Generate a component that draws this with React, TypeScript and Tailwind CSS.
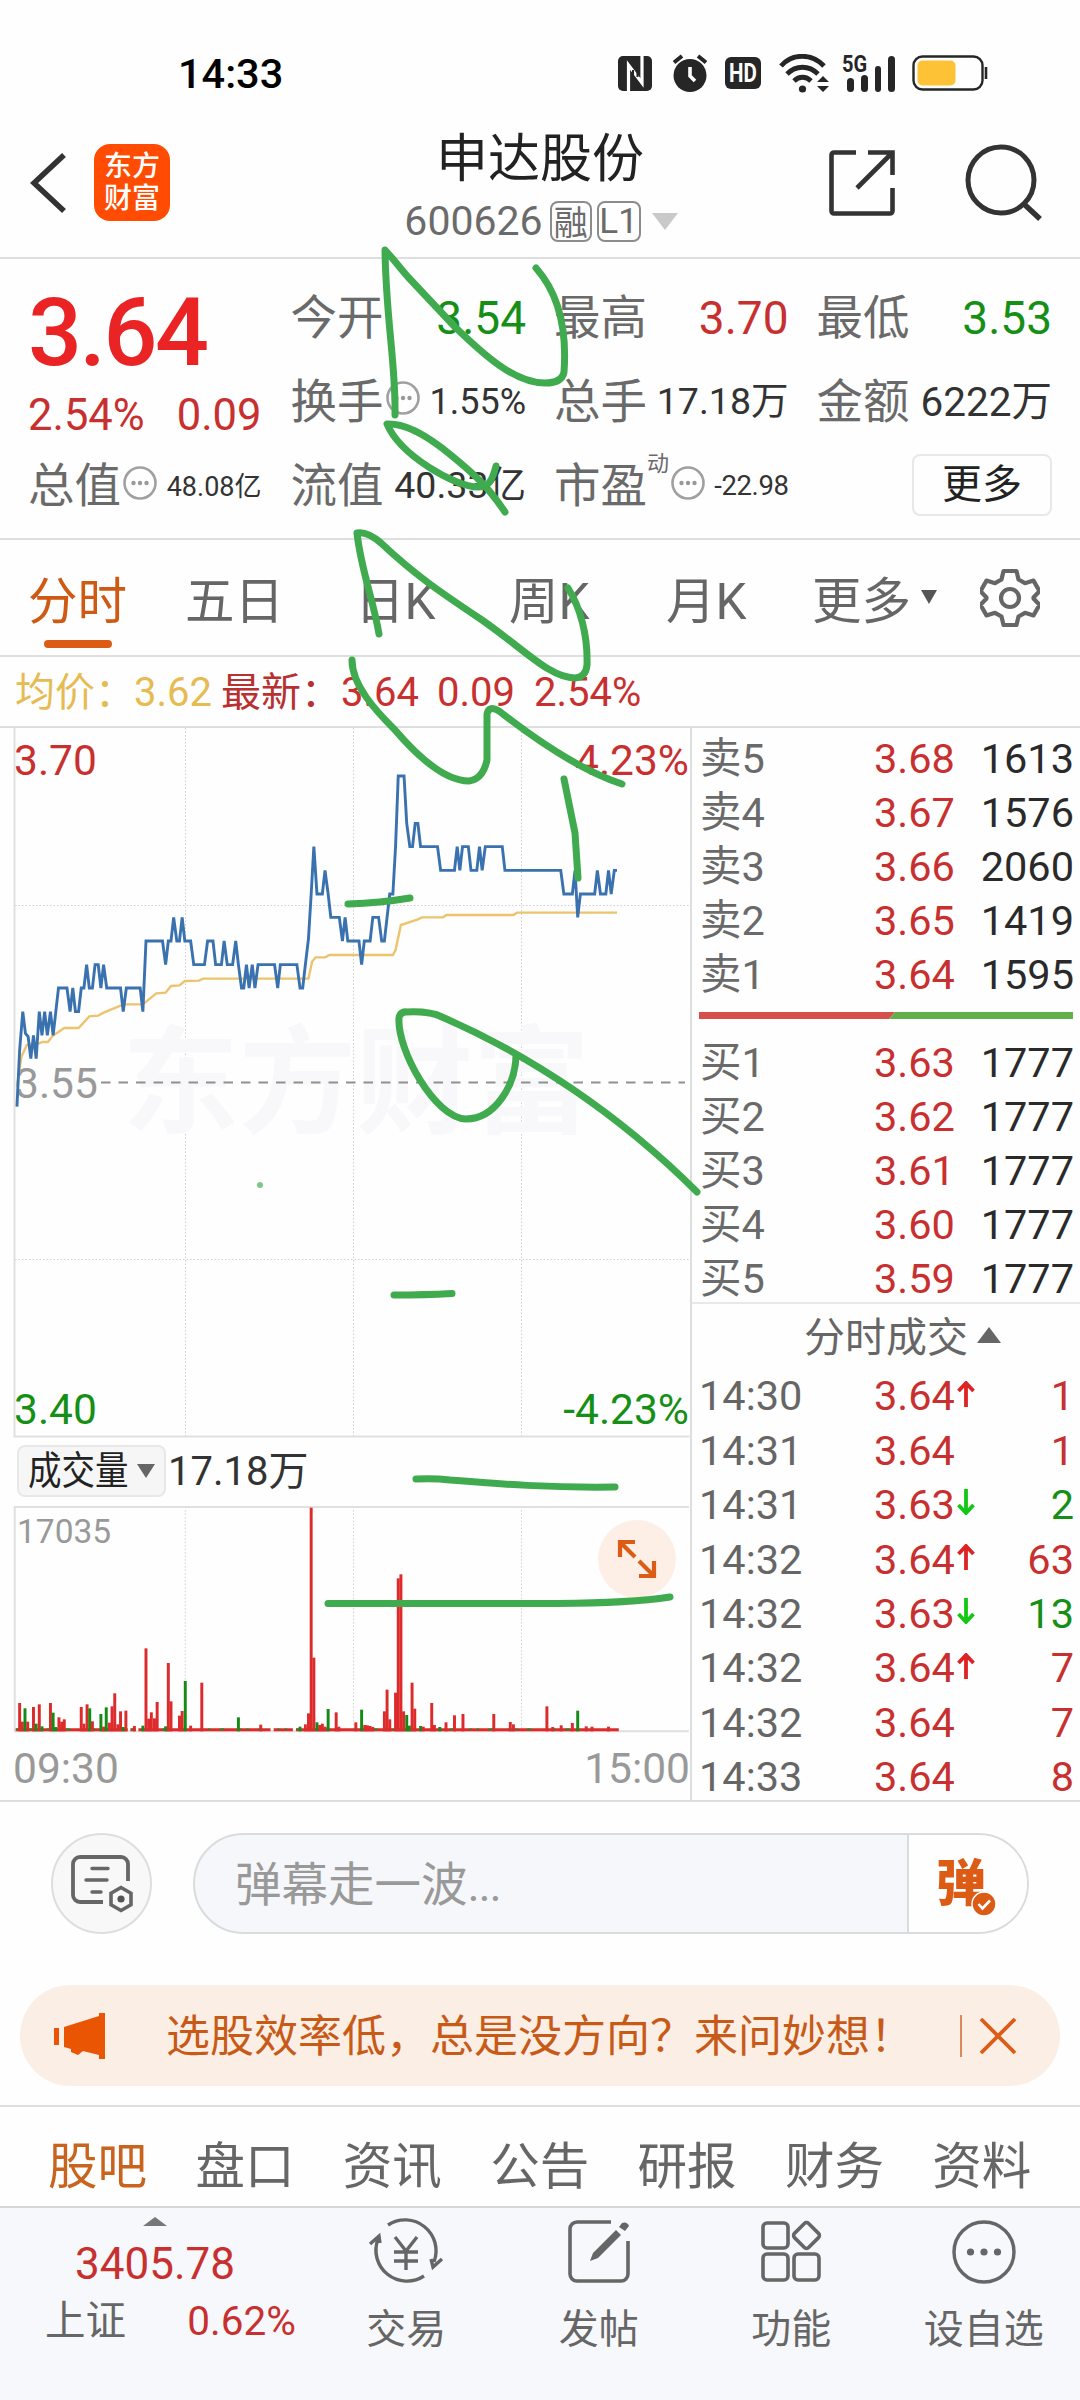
import React from "react";

const RED = "text-[#c83030]";
const GREEN = "text-[#168f16]";

type IconProps = { box: string; className: string; children: React.ReactNode };
const Icon = ({ box, className, children }: IconProps) => (
  <svg viewBox={box} className={"shrink-0 " + className} fill="none">
    {children}
  </svg>
);

/* ---------- status bar ---------- */
const StatusBar = () => (
  <div className="flex h-[120px] items-center pt-[26px] pl-[178px] pr-[92px] justify-between">
    <span className="text-[41.500px] leading-none font-medium text-black pt-[2px]">14:33</span>
    <div className="flex items-center text-[#262626]">
      <Icon box="0 0 35 35" className="w-[35px] h-[35px] mr-[19px]">
        <rect width="34" height="35" rx="5" fill="#262626" />
        <path d="M10.500 35V9L24 27V0" stroke="#fff" strokeWidth="3.200" />
        <path d="M15 14v8M19.500 13v8" stroke="#262626" strokeWidth="2" />
      </Icon>
      <Icon box="0 0 36 38" className="w-[36px] h-[38px] mr-[17px]">
        <circle cx="18" cy="21.500" r="16.500" fill="#262626" />
        <path d="M2 8.500 10 2M34 8.500 26 2" stroke="#262626" strokeWidth="4" />
        <path d="M18 13v9l5 5" stroke="#fff" strokeWidth="3.600" />
      </Icon>
      <span className="flex w-[36px] h-[32px] mr-[18px] items-center justify-center rounded-[6px] bg-[#262626] text-[25px] leading-none font-bold text-white">
        <span className="scale-x-[0.82]">HD</span>
      </span>
      <Icon box="0 0 50 39" className="w-[50px] h-[39px] mr-[14px]">
        <path d="M2 12C13-1 33-1 45 12M8 20c9-9 22-9 31 0M15 27c5-5 12-5 17 0" stroke="#262626" strokeWidth="4.800" />
        <circle cx="23.500" cy="35" r="3.600" fill="#262626" />
        <path d="m38 28 6-6 6 6zM38 32l6 6 6-6z" fill="#262626" />
      </Icon>
      <span className="relative flex w-[52px] h-[38px] mr-[17px] items-end gap-[7px] pl-[4px]">
        <span className="absolute -left-[1px] -top-[1px] text-[23px] leading-none font-bold">
          <span className="inline-block origin-left scale-x-[0.87]">5G</span>
        </span>
        <span className="w-[7px] h-[14px] rounded-sm bg-[#262626]" />
        <span className="w-[7px] h-[17px] rounded-sm bg-[#262626]" />
        <span className="w-[7px] h-[26px] rounded-sm bg-[#262626]" />
        <span className="w-[7px] h-[36px] rounded-sm bg-[#262626]" />
      </span>
      <Icon box="0 0 76 36" className="w-[76px] h-[36px]">
        <rect x="1.500" y="1.500" width="69" height="33" rx="9" stroke="#262626" strokeWidth="2.400" />
        <rect x="5.500" y="5.500" width="38" height="25" rx="5" fill="#fdc235" />
        <path d="M74 12v12" stroke="#262626" strokeWidth="2.600" />
      </Icon>
    </div>
  </div>
);

/* ---------- title bar ---------- */
const Header = () => (
  <div className="flex h-[139px] border-b-2 border-[#dedede]">
    <div className="flex w-[330px] items-center pb-[12px] pl-[30px]">
      <Icon box="0 0 38 62" className="w-[38px] h-[62px]">
        <path d="M34 3 4 31l30 28" stroke="#333" strokeWidth="5.600" />
      </Icon>
      <div className="ml-[26px] flex h-[77px] w-[76px] flex-col items-center justify-center rounded-[16px] bg-[#ff4c02] text-[28px] leading-[32px] font-medium text-white">
        <span>东方</span>
        <span>财富</span>
      </div>
    </div>
    <div className="flex w-[420px] flex-col items-center">
      <div className="mt-[14px] text-[52px] leading-[52px] text-[#222]">申达股份</div>
      <div className="mt-[15px] flex items-center pl-[2px] text-[41px] leading-none text-[#6b6b6b]">
        <span>600626</span>
        <span className="ml-[7px] flex h-[41px] w-[42px] items-center justify-center rounded-[8px] border-2 border-[#8c8c8c] pt-[2px] text-[34px] leading-none">融</span>
        <span className="ml-[5px] flex h-[41px] w-[44px] items-center justify-center rounded-[8px] border-2 border-[#8c8c8c] text-[35px] leading-none">L1</span>
        <Icon box="0 0 26 17" className="ml-[11px] w-[26px] h-[17px]">
          <path d="M0 0h26L13 17z" fill="#c9c9c9" />
        </Icon>
      </div>
    </div>
    <div className="flex flex-1 items-center justify-end pb-[12px] pr-[36px]">
      <Icon box="0 0 66 66" className="w-[66px] h-[66px] mr-[70px]">
        <path d="M27 2.500H5a2.500 2.500 0 0 0-2.500 2.500v56A2.500 2.500 0 0 0 5 63.500h56a2.500 2.500 0 0 0 2.500-2.500V38" stroke="#333" strokeWidth="4.600" />
        <path d="M39 2.500h24.500V25M63 3 28 38" stroke="#333" strokeWidth="4.600" />
      </Icon>
      <Icon box="0 0 79 78" className="w-[79px] h-[78px]">
        <circle cx="36" cy="36" r="33" stroke="#333" strokeWidth="5" />
        <path d="m59 60 16 15" stroke="#333" strokeWidth="5.500" />
      </Icon>
    </div>
  </div>
);

/* ---------- quote summary ---------- */
const Info = () => (
  <Icon box="0 0 34 34" className="w-[34px] h-[34px]">
    <circle cx="17" cy="17" r="15.500" stroke="#a0a0a0" strokeWidth="2.600" />
    <circle cx="10.500" cy="17" r="2.200" fill="#999" />
    <circle cx="17" cy="17" r="2.200" fill="#999" />
    <circle cx="23.500" cy="17" r="2.200" fill="#999" />
  </Icon>
);

const Label = ({ children }: { children: React.ReactNode }) => (
  <span className="pt-[3px] text-[46.500px] leading-none text-[#6a6a6a]">{children}</span>
);

const Row = ({ children }: { children: React.ReactNode }) => (
  <div className="flex h-[84px] items-center justify-between">{children}</div>
);

const Quote = () => (
  <div className="flex h-[281px] border-b-2 border-[#dedede] pt-[16px] pl-[28px] pr-[28px] whitespace-nowrap">
    <div className="flex w-[234px] flex-col">
      <div className="flex h-[114px] items-center text-[95px] leading-none font-medium tracking-[-2.5px] text-[#ea2424]">
        <span>3.64</span>
      </div>
      <div className={"flex h-[54px] items-center justify-between text-[43.500px] leading-none " + RED}>
        <span>2.54%</span>
        <span>0.09</span>
      </div>
      <div className="flex h-[84px] items-center">
        <Label>总值</Label>
        <span className="ml-[2px] -mt-[5px]"><Info /></span>
        <span className="ml-auto text-[27px] leading-none text-[#333] pt-[4px]">48.08亿</span>
      </div>
    </div>
    <div className="ml-[29px] flex w-[236px] flex-col">
      <Row>
        <Label>今开</Label>
        <span className={"pt-[2px] text-[46px] leading-none " + GREEN}>3.54</span>
      </Row>
      <Row>
        <span className="flex items-center">
          <Label>换手</Label>
          <span className="ml-[2px] -mt-[6px]"><Info /></span>
        </span>
        <span className="pt-[2px] text-[36px] leading-none text-[#333]">1.55%</span>
      </Row>
      <Row>
        <Label>流值</Label>
        <span className="pt-[2px] text-[37.500px] leading-none text-[#333]">40.33亿</span>
      </Row>
    </div>
    <div className="ml-[28px] flex w-[235px] flex-col">
      <Row>
        <Label>最高</Label>
        <span className={"pt-[2px] text-[46px] leading-none " + RED}>3.70</span>
      </Row>
      <Row>
        <Label>总手</Label>
        <span className="pt-[2px] text-[37.500px] leading-none text-[#333]">17.18万</span>
      </Row>
      <div className="flex h-[84px] items-center">
        <Label>市盈</Label>
        <span className="-mt-[42px] text-[22px] leading-none text-[#6a6a6a]">动</span>
        <span className="ml-[2px] -mt-[5px]"><Info /></span>
        <span className="ml-auto pt-[2px] text-[27.500px] leading-none text-[#333] tracking-[-0.4px]">-22.98</span>
      </div>
    </div>
    <div className="ml-[28px] flex w-[236px] flex-col">
      <Row>
        <Label>最低</Label>
        <span className={"pt-[2px] text-[46px] leading-none " + GREEN}>3.53</span>
      </Row>
      <Row>
        <Label>金额</Label>
        <span className="pt-[2px] text-[40.500px] leading-none text-[#333]">6222万</span>
      </Row>
      <div className="flex h-[84px] items-center justify-end">
        <span className="flex h-[62px] w-[140px] items-center justify-center rounded-[8px] border-2 border-[#e8e8e8] text-[40px] leading-none text-[#222]">更多</span>
      </div>
    </div>
  </div>
);

/* ---------- period tabs ---------- */
const TABS = [
  { t: "分时", w: "w-[157px]" },
  { t: "五日", w: "w-[170px]" },
  { t: "日K", w: "w-[154px]" },
  { t: "周K", w: "w-[157px]" },
  { t: "月K", w: "w-[146px]" },
];

const PeriodTabs = () => (
  <div className="flex h-[117px] border-b-2 border-[#dedede] pl-[28px] text-[49.500px] leading-none text-[#666] whitespace-nowrap">
    {TABS.map((tab, i) => (
      <div key={tab.t} className={tab.w + " flex flex-col"}>
        <span className={i === 0 ? "mt-[38px] text-[#cf5a14]" : "mt-[38px]"}>{tab.t}</span>
        {i === 0 && <span className="mt-[12px] ml-[16px] h-[8px] w-[68px] rounded-full bg-[#dc5c16]" />}
      </div>
    ))}
    <span className="mt-[38px]">更多</span>
    <Icon box="0 0 16 14" className="mt-[50px] ml-[10px] w-[16px] h-[14px]">
      <path d="M0 0h16L8 14z" fill="#555" />
    </Icon>
    <Icon box="-30 -30 60 60" className="mt-[28px] ml-[43px] w-[60px] h-[60px]">
      <path
        d="M-6.500-27h13l2 8.500 6.500 3.700 8.500-2.600 6 10.500-6 6.400v1l6 6.400-6 10.500-8.500-2.600-6.500 3.700-2 8.500h-13l-2-8.500-6.500-3.700-8.500 2.600-6-10.500 6-6.400v-1l-6-6.400 6-10.500 8.500 2.600 6.500-3.700z"
        stroke="#666"
        strokeWidth="4.200"
        strokeLinejoin="round"
      />
      <circle r="9" stroke="#666" strokeWidth="4.200" />
    </Icon>
  </div>
);

const PriceLine = () => (
  <div className="flex h-[71px] items-center border-b-2 border-[#dedede] pl-[15px] pt-[2px] text-[40px] leading-none whitespace-nowrap">
    <span className="w-[119px] text-[#e6bb52]">均价：</span>
    <span className="w-[87px] text-[#e6bb52]">3.62</span>
    <span className="w-[120px] text-[#b83030]">最新：</span>
    <span className="w-[96px] text-[#c83030]">3.64</span>
    <span className="w-[97px] text-[#c83030]">0.09</span>
    <span className="text-[#c83030]">2.54%</span>
  </div>
);

/* ---------- intraday chart ---------- */
const PRICE =
  "38,1160 44,990 51,875 57,940 63,950 69,1016 75,946 81,1016 88,875 94,946 100,875 106,946 113,875 119,946 131,804 150,804 157,875 163,804 169,875 176,875 182,804 188,804 194,734 200,804 207,804 213,734 220,734 226,804 232,734 239,804 270,804 276,875 283,804 314,804 320,875 327,663 364,663 371,734 377,663 383,663 389,592 396,663 402,663 408,592 414,663 427,663 434,734 458,734 465,663 477,663 483,734 496,734 502,663 509,734 521,734 528,663 534,734 541,804 546,804 552,734 558,804 565,734 571,804 578,734 615,734 622,804 628,734 665,734 672,804 678,804 684,734 691,655 697,522 703,380 710,522 722,522 728,451 735,522 741,592 760,592 767,663 773,592 779,663 804,663 810,734 816,663 829,663 835,592 848,592 855,663 861,663 867,592 873,522 880,522 886,380 892,168 905,168 911,310 918,380 924,380 930,310 936,310 942,380 980,380 987,451 1018,451 1024,380 1030,451 1036,380 1049,380 1055,451 1068,451 1074,380 1080,451 1087,380 1125,380 1131,451 1256,451 1263,522 1282,522 1288,451 1294,592 1300,522 1332,522 1338,451 1345,522 1357,522 1363,451 1369,522 1376,451 1382,451";
const AVERAGE =
  "38,1100 48,1010 60,975 88,970 95,966 107,966 119,946 131,936 144,924 176,924 200,889 220,887 232,878 270,857 283,853 320,853 350,820 371,818 383,798 402,796 414,783 446,782 455,776 691,776 699,725 707,712 728,712 738,705 880,705 886,690 898,615 936,598 945,592 992,592 1000,585 1150,585 1158,578 1382,578";

const PriceChart = () => (
  <div className="relative h-[710px]">
    <svg className="absolute inset-0 h-[710px] w-[692px]" viewBox="0 0 692 710" fill="none">
      <path d="M185.500 0V708M353.500 0V708M521.500 0V708M15 177.500H689M15 531.500H689" stroke="#cfcfcf" strokeDasharray="1.500 2" />
      <path d="M14.500 0V708.500H689.500" stroke="#e0e0e1" strokeWidth="2" />
      <text x="356" y="396" fontSize="117" fontWeight="bold" textAnchor="middle" fill="#f8f8fa" fontFamily="Noto Sans CJK SC">东方财富</text>
      <path d="M101 354.500H685" stroke="#909090" strokeWidth="2" strokeDasharray="9.500 8" />
    </svg>
    <span className="absolute left-[15px] top-[335px] text-[42.500px] leading-none text-[#999]">3.55</span>
    <svg className="absolute inset-0 h-[710px] w-[692px]" viewBox="0 24 1550 2130" preserveAspectRatio="none" fill="none">
      <polyline points={AVERAGE} stroke="#ecc46e" strokeWidth="2.400" vectorEffect="non-scaling-stroke" />
      <polyline points={PRICE} stroke="#3a72b0" strokeWidth="2.900" vectorEffect="non-scaling-stroke" />
    </svg>
    <span className={"absolute left-[14px] top-[12px] text-[42.500px] leading-none " + RED}>3.70</span>
    <span className={"absolute right-[1px] top-[12px] text-[42.500px] leading-none " + RED}>4.23%</span>
    <span className={"absolute left-[14px] top-[661px] text-[42.500px] leading-none " + GREEN}>3.40</span>
    <span className={"absolute right-[1px] top-[661px] text-[42.500px] leading-none " + GREEN}>-4.23%</span>
  </div>
);

/* x, top, colour (r or g) of the taller bars; the rest is a thin strip along the base line */
const BARS: [number, number, string][] = [
  [44, 818, "r"], [50, 874, "r"], [56, 834, "g"], [62, 874, "r"], [75, 830, "r"], [81, 880, "g"], [88, 822, "r"], [94, 888, "g"],
  [113, 818, "r"], [119, 847, "g"], [125, 890, "g"], [132, 861, "r"], [138, 874, "r"], [144, 867, "r"], [182, 830, "r"], [188, 880, "r"],
  [195, 822, "r"], [201, 834, "g"], [207, 873, "r"], [226, 851, "g"], [232, 889, "r"], [238, 831, "g"], [245, 877, "r"], [251, 828, "r"],
  [257, 789, "r"], [264, 882, "r"], [270, 843, "r"], [276, 890, "g"], [282, 841, "r"], [301, 887, "r"], [320, 886, "g"], [327, 654, "r"],
  [333, 865, "r"], [339, 846, "r"], [346, 864, "r"], [352, 815, "r"], [371, 888, "g"], [377, 698, "r"], [383, 813, "r"], [402, 856, "r"],
  [408, 842, "r"], [415, 752, "g"], [427, 886, "r"], [452, 757, "r"], [534, 861, "g"], [584, 883, "r"], [672, 889, "g"], [684, 882, "r"],
  [691, 849, "r"], [697, 232, "r"], [703, 682, "r"], [710, 876, "g"], [716, 884, "r"], [722, 880, "r"], [728, 889, "r"], [735, 836, "g"],
  [753, 846, "r"], [759, 889, "r"], [797, 876, "r"], [810, 838, "g"], [817, 884, "r"], [823, 885, "r"], [829, 887, "r"], [835, 890, "r"],
  [861, 843, "r"], [867, 778, "r"], [873, 867, "r"], [886, 787, "r"], [892, 444, "r"], [898, 432, "r"], [904, 843, "r"], [911, 854, "g"],
  [917, 886, "g"], [923, 757, "r"], [929, 835, "r"], [942, 887, "g"], [948, 889, "r"], [967, 818, "r"], [973, 884, "r"], [985, 890, "g"],
  [999, 876, "r"], [1018, 855, "r"], [1037, 851, "r"], [1106, 851, "r"], [1143, 875, "r"], [1150, 882, "r"], [1225, 828, "r"], [1238, 890, "r"],
  [1257, 885, "r"], [1282, 878, "r"], [1294, 841, "g"], [1313, 888, "r"], [1326, 889, "r"], [1363, 889, "r"],
];

const VolumeChart = () => (
  <div className="relative h-[228px]">
    <svg className="absolute inset-0 h-[228px] w-[692px]" viewBox="0 227 1550 684" preserveAspectRatio="none">
      <path d="M415 229V903M792 229V903M1168 229V903" stroke="#cfcfcf" strokeDasharray="1.500 2" vectorEffect="non-scaling-stroke" />
      <path d="M1543 903H33V230H1543" fill="none" stroke="#e0e0e1" strokeWidth="2" vectorEffect="non-scaling-stroke" />
      <path d="M35 898.500H286M292 898.500H304M310 898.500H606M613 898.500H656M663 898.500H1386" stroke="#dd2b2b" strokeWidth="9" />
      <path d="M36 897H1300" stroke="#2c8a22" strokeWidth="5" strokeDasharray="5 21 10 33 5 12" />
      {BARS.map(([x, top, c]) => (
        <rect key={x} x={x - 3.3} y={top} width="6.6" height={903 - top} fill={c === "r" ? "#dd2b2b" : "#168a16"} />
      ))}
    </svg>
    <span className="absolute left-[17px] top-[9px] text-[33.500px] leading-none text-[#999]">17035</span>
    <span className="absolute left-[598px] top-[14px] flex h-[78px] w-[78px] items-center justify-center rounded-full bg-[#fdeee6]">
      <Icon box="0 0 40 40" className="w-[40px] h-[40px]">
        <path d="M3 18V3h15M3 3l15 15M37 22v15H22M37 37 22 22" stroke="#dc5c16" strokeWidth="4.200" />
      </Icon>
    </span>
  </div>
);

const ChartPanel = () => (
  <div className="w-[692px] border-r-2 border-[#dedede]">
    <PriceChart />
    <div className="flex h-[68px] items-center pl-[17px] pb-[3px] whitespace-nowrap">
      <div className="flex h-[52px] w-[149px] items-center rounded-[8px] border-2 border-[#e8e8e8] bg-[#f6f6f6] pl-[9px]">
        <span className="w-[100px] pt-[2px] text-[38.500px] leading-none text-[#222]">
          <span className="inline-block origin-left scale-x-[0.87]">成交量</span>
        </span>
        <Icon box="0 0 18 14" className="ml-[9px] w-[18px] h-[14px]">
          <path d="M0 0h18L9 14z" fill="#666" />
        </Icon>
      </div>
      <span className="ml-[2px] pt-[2px] text-[40px] leading-none text-[#333]">17.18万</span>
    </div>
    <VolumeChart />
    <div className="flex justify-between pt-[14px] pl-[13px] pr-0 text-[42.500px] leading-none text-[#999]">
      <span>09:30</span>
      <span>15:00</span>
    </div>
  </div>
);

/* ---------- order book and trades ---------- */
const SELLS = [["卖5", "3.68", "1613"], ["卖4", "3.67", "1576"], ["卖3", "3.66", "2060"], ["卖2", "3.65", "1419"], ["卖1", "3.64", "1595"]];
const BUYS = [["买1", "3.63", "1777"], ["买2", "3.62", "1777"], ["买3", "3.61", "1777"], ["买4", "3.60", "1777"], ["买5", "3.59", "1777"]];
const TRADES: [string, string, string, string, boolean][] = [
  ["14:30", "3.64", "up", "1", false],
  ["14:31", "3.64", "", "1", false],
  ["14:31", "3.63", "down", "2", true],
  ["14:32", "3.64", "up", "63", false],
  ["14:32", "3.63", "down", "13", true],
  ["14:32", "3.64", "up", "7", false],
  ["14:32", "3.64", "", "7", false],
  ["14:33", "3.64", "", "8", false],
];

const BookRow = ({ r }: { r: string[] }) => (
  <div className="flex h-[54px] items-center">
    <span className="w-[174px] text-[#6a6a6a]">{r[0]}</span>
    <span className={RED}>{r[1]}</span>
    <span className="ml-auto text-[#2a2a2a]">{r[2]}</span>
  </div>
);

const BookPanel = () => (
  <div className="flex-1 text-[41.500px] leading-none whitespace-nowrap">
    <div className="pt-[4px] pl-[8px] pr-[6px]">
      {SELLS.map((r) => <BookRow key={r[0]} r={r} />)}
      <svg className="-ml-[1px] mt-[10px] mb-[17px] h-[7px] w-[374px]" viewBox="0 0 374 7">
        <path d="M0 0H196L190 7H0z" fill="#d64f4a" />
        <path d="M196 0H374V7H190z" fill="#62b04c" />
      </svg>
      {BUYS.map((r) => <BookRow key={r[0]} r={r} />)}
    </div>
    <div className="-mt-[4px] flex h-[68px] items-center border-t-2 border-[#e8e8e8] pl-[112px] pt-[2px] text-[41px] text-[#666]">
      分时成交
      <Icon box="0 0 24 16" className="ml-[9px] mb-[6px] w-[24px] h-[16px]">
        <path d="M12 0 24 16H0z" fill="#666" />
      </Icon>
    </div>
    <div className="pl-[7px] pr-[6px] -mt-[1px]">
      {TRADES.map(([t, p, dir, q, green], i) => (
        <div key={i} className="flex h-[54.4px] items-center">
          <span className="w-[175px] text-[#666]">{t}</span>
          <span className={RED}>{p}</span>
          {dir !== "" && (
            <Icon box="0 0 18 26" className="ml-[2px] mb-[5px] w-[18px] h-[26px]">
              {dir === "up" ? (
                <path d="M9 26V2M1.500 10 9 2l7.500 8" stroke="#dd2424" strokeWidth="3.800" />
              ) : (
                <path d="M9 0v24M1.500 16 9 24l7.500-8" stroke="#12c812" strokeWidth="3.800" />
              )}
            </Icon>
          )}
          <span className={"ml-auto " + (green ? GREEN : RED)}>{q}</span>
        </div>
      ))}
    </div>
  </div>
);

/* ---------- comment bar and banner ---------- */
const CommentBar = () => (
  <div className="flex h-[103px] pl-[51px]">
    <div className="flex h-[101px] w-[101px] items-center justify-center rounded-full border-2 border-[#dedede] bg-[#f8f8f8]">
      <Icon box="0 0 62 58" className="w-[62px] h-[58px]">
        <path d="M57 26V9a7 7 0 0 0-7-7H9a7 7 0 0 0-7 7v31a7 7 0 0 0 7 7h23" stroke="#666" strokeWidth="3.800" />
        <path d="M21 13.500h16M15 25h21M21 37h9" stroke="#666" strokeWidth="3.400" strokeLinecap="round" />
        <path d="m50 32.500 10 5.700v11.600l-10 5.700-10-5.700V38.200z" stroke="#666" strokeWidth="3.600" />
        <circle cx="50" cy="44" r="3.600" fill="#555" />
      </Icon>
    </div>
    <div className="ml-[41px] flex h-[101px] w-[836px] overflow-hidden rounded-full border-2 border-[#d9dbdd] bg-[#f6f7fa]">
      <div className="flex w-[712px] shrink-0 items-center pl-[40px] pt-[4px] text-[46.500px] leading-none text-[#999]">
        弹幕走一波<span className="tracking-[-1.2px]">...</span>
      </div>
      <div className="flex flex-1 items-center border-l-2 border-[#d9dbdd] bg-[#fefefe] pl-[27px]">
        <span className="relative text-[50px] leading-none font-black text-[#dc5c16]">
          弹
          <Icon box="0 0 26 26" className="absolute left-[35px] top-[32px] w-[26px] h-[26px]">
            <circle cx="13" cy="13" r="12" fill="#dc5c16" stroke="#fff" strokeWidth="1.500" />
            <path d="m7.500 13 4 4.500 7.500-8" stroke="#fff" strokeWidth="2.600" />
          </Icon>
        </span>
      </div>
    </div>
  </div>
);

const Banner = () => (
  <div className="mx-[20px] mt-[49px] flex h-[101px] items-center rounded-full bg-[#fbeee5] text-[44px] leading-none whitespace-nowrap">
    <Icon box="0 0 54 46" className="ml-[33px] w-[54px] h-[46px]">
      <path d="M1 15h5v17H1zM11 14 46 3V0h6v46h-6v-4l-16-4-5 4-7-3v-3l-7-2z" fill="#ea5504" />
    </Icon>
    <span className="ml-[59px] w-[794px] pt-[2px] text-[#c85a18]">选股效率低，总是没方向？来问妙想！</span>
    <span className="h-[42px] w-[2px] bg-[#dc8a5a]" />
    <Icon box="0 0 38 38" className="ml-[17px] w-[38px] h-[38px]">
      <path d="m2 2 34 34M36 2 2 36" stroke="#dc5c16" strokeWidth="3.800" />
    </Icon>
  </div>
);

/* ---------- bottom navigation ---------- */
const SECTIONS = ["股吧", "盘口", "资讯", "公告", "研报", "财务", "资料"];

const NavItem = ({ label, children }: { label: string; children: React.ReactNode }) => (
  <div className="flex w-[192.5px] flex-col items-center">
    <Icon box="0 0 76 68" className="mt-[9px] w-[76px] h-[68px]">{children}</Icon>
    <span className="mt-[25px] text-[40px] leading-none text-[#666]">{label}</span>
  </div>
);

const BottomNav = () => (
  <div className="flex h-[192px] bg-[#f7f8fb] whitespace-nowrap">
    <div className="flex w-[310px] flex-col items-center">
      <Icon box="0 0 24 9" className="mt-[9px] w-[24px] h-[9px]">
        <path d="M12 0 24 9H0z" fill="#777" />
      </Icon>
      <span className={"mt-[16px] text-[44px] leading-none " + RED}>3405.78</span>
      <div className="mt-[14px] flex w-full items-center pl-[45px] pr-[14px] justify-between text-[40.500px] leading-none">
        <span className="pt-[1px] text-[#666]">上证</span>
        <span className={RED}>0.62%</span>
      </div>
    </div>
    <NavItem label="交易">
      <path d="M20 8A31 31 0 0 1 66 45M56 59A31 31 0 0 1 10 22M2 27l9-8 1 7M74 42l-9 8-2-8" stroke="#666" strokeWidth="3.400" />
      <path d="m27 20 11 14 11-14M38 34v19M26 35h24M26 44h24" stroke="#666" strokeWidth="3.400" />
    </NavItem>
    <NavItem label="发帖">
      <path d="M50 5H16a7 7 0 0 0-7 7v45a7 7 0 0 0 7 7h44a7 7 0 0 0 7-7V24" stroke="#666" strokeWidth="3.600" />
      <path d="m29 44 3-8 23-23 5 5-23 23z" fill="#666" />
      <path d="m58 10 3-4q5-2 7 3l-4 5z" fill="#666" />
    </NavItem>
    <NavItem label="功能">
      <rect x="10" y="6" width="25" height="25" rx="4" stroke="#666" strokeWidth="3.600" />
      <rect x="10" y="37" width="25" height="26" rx="4" stroke="#666" strokeWidth="3.600" />
      <rect x="41" y="37" width="25" height="26" rx="4" stroke="#666" strokeWidth="3.600" />
      <rect x="43.500" y="8.500" width="20" height="20" rx="3" transform="rotate(45 53.500 18.500)" stroke="#666" strokeWidth="3.600" />
    </NavItem>
    <NavItem label="设自选">
      <circle cx="38" cy="35" r="30" stroke="#666" strokeWidth="3.400" />
      <circle cx="24.500" cy="35" r="3.600" fill="#666" />
      <circle cx="38" cy="35" r="3.600" fill="#666" />
      <circle cx="51.500" cy="35" r="3.600" fill="#666" />
    </NavItem>
  </div>
);

/* ---------- freehand pen marks drawn over the page ---------- */
const PenMarks = () => (
  <svg className="pointer-events-none absolute inset-0 h-[2400px] w-[1080px]" viewBox="0 0 1080 2400" fill="none" stroke="#40ab4e" strokeWidth="7" strokeLinecap="round" strokeLinejoin="round">
    <path d="M395 415C396 365 386 320 385 250C396 262 400 268 408 277L455 327C485 356 515 383 545 383Q562 383 564 372C567 330 560 295 536 268" />
    <path d="M496 466C492 482 488 487 478 487C455 487 400 455 387 424C405 423 425 435 442 448C480 478 490 490 505 512" />
    <path d="M379 634C373 598 361 570 357 533Q367 531 381 543C415 575 440 592 482 620C525 650 550 678 575 678Q586 677 587 665C588 635 580 607 568 588" />
    <path d="M352 660C352 685 375 710 395 730C425 765 450 781 469 781Q483 779 487 760V714Q489 705 499 711C540 743 585 772 622 784" />
    <path d="M564 779L575 833L578 878" />
    <path d="M348 904Q380 903 410 898" />
    <path d="M516 1054C516 1085 495 1119 466 1119C435 1118 397 1050 399 1018Q400 1011 407 1012Q430 1011 442 1017C530 1055 620 1115 697 1192" />
    <path d="M394 1295Q425 1295 452 1293.500" />
    <path d="M416 1479Q434 1478 450 1480C500 1484 550 1488 615 1487" />
    <path d="M328 1603.500H558Q630 1603 670 1597" />
    <circle cx="260" cy="1185" r="3" fill="#7cc887" stroke="none" />
  </svg>
);

export default function App() {
  return (
    <div className="relative h-[2400px] w-[1080px] overflow-hidden bg-[#fefefe] font-[Roboto,'Noto_Sans_CJK_SC',sans-serif]">
      <StatusBar />
      <Header />
      <Quote />
      <PeriodTabs />
      <PriceLine />
      <div className="flex h-[1074px] border-b-2 border-[#dedede]">
        <ChartPanel />
        <BookPanel />
      </div>
      <div className="h-[305px] border-b-2 border-[#dedede] pt-[31px]">
        <CommentBar />
        <Banner />
      </div>
      <div className="flex h-[101px] items-center border-b-2 border-[#d5d7d9] pl-[48px] text-[49.500px] leading-none text-[#666] whitespace-nowrap">
        {SECTIONS.map((s, i) => (
          <span key={s} className={i === 0 ? "w-[147.4px] pt-[23px] text-[#c8641e]" : "w-[147.4px] pt-[23px]"}>{s}</span>
        ))}
      </div>
      <BottomNav />
      <PenMarks />
    </div>
  );
}
